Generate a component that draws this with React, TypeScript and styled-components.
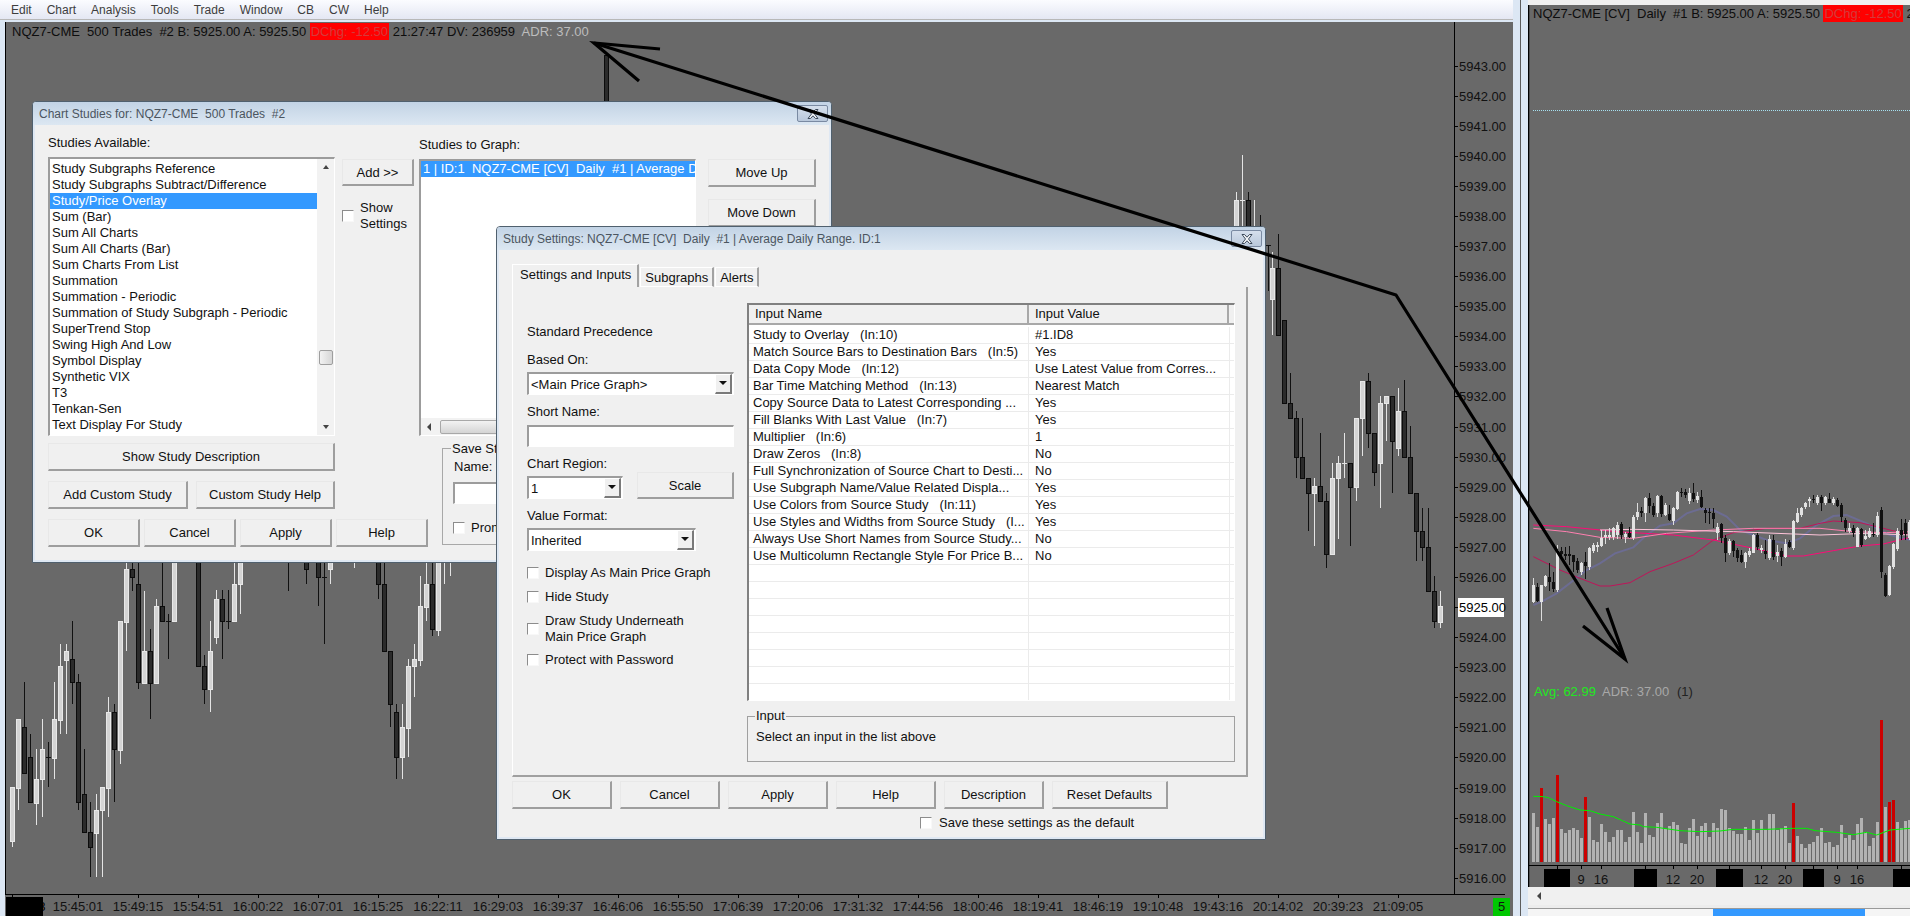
import React from 'react';
import styled, { createGlobalStyle } from 'styled-components';

const UI_FONT = '"Liberation Sans", Arial, sans-serif';

type Candle = [number, number, number, number, number, number];

// cx, high, bodyTop, bodyBottom, low, 1 = white / 0 = black
const LEFT_CANDLES: Candle[] = [
  [12, 787, 787, 841, 847, 1], [18, 719, 719, 788, 810, 1], [24, 682, 727, 773, 773, 0], [30, 734, 757, 802, 802, 0],
  [36, 749, 779, 803, 825, 1], [42, 719, 749, 779, 817, 1], [48, 742, 757, 757, 787, 0], [54, 682, 719, 758, 779, 1],
  [60, 644, 666, 720, 734, 1], [66, 644, 651, 660, 734, 1], [72, 621, 659, 682, 704, 0], [78, 674, 682, 802, 810, 0],
  [84, 749, 794, 832, 832, 0], [90, 802, 832, 847, 877, 0], [96, 794, 810, 833, 877, 1], [102, 787, 787, 810, 877, 1],
  [108, 697, 712, 788, 817, 1], [114, 704, 712, 749, 802, 0], [120, 621, 621, 750, 764, 1], [126, 540, 569, 622, 651, 1],
  [132, 540, 569, 577, 591, 0], [138, 540, 584, 682, 689, 0], [144, 591, 651, 683, 683, 1], [150, 629, 651, 683, 719, 0],
  [156, 599, 606, 683, 683, 1], [162, 540, 606, 621, 621, 0], [168, 614, 621, 621, 659, 0], [174, 540, 540, 621, 621, 1],
  [198, 540, 540, 666, 666, 0], [204, 655, 666, 689, 704, 0], [210, 621, 651, 689, 712, 1], [216, 590, 599, 637, 644, 1],
  [222, 590, 599, 621, 659, 0], [228, 590, 621, 621, 629, 0], [234, 540, 584, 621, 621, 1], [240, 540, 540, 584, 614, 1],
  [288, 540, 540, 540, 591, 0], [306, 540, 540, 569, 584, 0], [318, 540, 540, 577, 606, 0], [324, 540, 577, 577, 644, 0],
  [330, 540, 540, 569, 584, 1], [354, 540, 540, 540, 568, 1], [378, 540, 540, 584, 599, 0], [384, 540, 584, 651, 651, 0],
  [390, 651, 651, 704, 727, 0], [396, 704, 712, 757, 779, 0], [402, 704, 727, 757, 779, 1], [408, 659, 666, 728, 757, 1],
  [414, 644, 659, 666, 697, 1], [420, 576, 606, 660, 666, 1], [426, 560, 584, 607, 621, 1], [432, 540, 584, 629, 636, 0],
  [438, 540, 540, 630, 636, 1], [444, 540, 540, 540, 584, 1], [450, 540, 540, 540, 576, 1],
  [606, 55, 55, 101, 101, 0],
  [1236, 192, 200, 260, 260, 1], [1242, 155, 200, 200, 260, 1], [1248, 192, 200, 260, 260, 0], [1254, 200, 260, 260, 260, 1],
  [1260, 215, 260, 260, 260, 0], [1268, 245, 245, 245, 291, 0], [1272, 252, 268, 299, 335, 1], [1278, 234, 268, 335, 335, 0],
  [1284, 320, 320, 403, 403, 0], [1290, 373, 403, 418, 418, 0], [1296, 411, 418, 457, 478, 0], [1302, 418, 457, 478, 478, 0],
  [1308, 478, 478, 493, 531, 0], [1314, 478, 486, 493, 546, 1], [1320, 433, 486, 501, 501, 0], [1326, 493, 501, 554, 568, 0],
  [1332, 463, 478, 554, 554, 1], [1338, 456, 463, 478, 539, 1], [1344, 433, 463, 463, 478, 1], [1350, 463, 463, 487, 546, 0],
  [1356, 418, 418, 487, 501, 1], [1362, 381, 381, 418, 456, 1], [1368, 373, 381, 433, 448, 0], [1374, 433, 433, 472, 486, 0],
  [1380, 396, 403, 463, 508, 1], [1386, 396, 396, 403, 441, 1], [1392, 396, 396, 441, 493, 0], [1398, 388, 411, 448, 456, 1],
  [1404, 380, 411, 457, 457, 0], [1410, 426, 457, 493, 493, 0], [1416, 493, 493, 531, 561, 0], [1422, 508, 531, 547, 561, 0],
  [1428, 508, 547, 591, 591, 0], [1434, 576, 591, 621, 628, 0], [1440, 591, 606, 622, 628, 1],
];

// zoomed offsets from the daily chart, one row per candle: high, top, bottom, low, white
const RIGHT_RAW: number[][] = [
  [355, 375, 425, 430, 1], [370, 380, 423, 425, 0], [375, 375, 425, 482, 1], [345, 348, 378, 380, 1], [310, 350, 365, 392, 0],
  [335, 365, 388, 397, 0], [255, 270, 390, 395, 1], [260, 273, 283, 300, 0], [260, 283, 287, 300, 0], [258, 283, 287, 315, 0],
  [285, 285, 305, 335, 0], [295, 303, 330, 340, 0], [305, 310, 335, 345, 1], [275, 305, 318, 358, 0], [260, 265, 320, 330, 1],
  [250, 255, 272, 278, 1], [245, 255, 262, 275, 1], [210, 235, 258, 260, 1], [210, 225, 230, 252, 1], [205, 225, 232, 240, 1],
  [200, 205, 230, 240, 1], [185, 195, 225, 238, 1], [185, 192, 225, 238, 0], [215, 222, 230, 248, 1], [200, 218, 232, 235, 0],
  [165, 170, 235, 240, 1], [130, 155, 170, 180, 1], [142, 152, 160, 170, 0], [110, 113, 158, 185, 1], [100, 115, 138, 158, 0],
  [130, 138, 165, 170, 0], [105, 108, 160, 170, 1], [105, 108, 163, 172, 0], [130, 135, 165, 168, 1], [135, 162, 180, 183, 0],
  [140, 145, 182, 195, 1], [92, 95, 148, 150, 1], [85, 97, 100, 110, 0], [87, 97, 106, 115, 0], [85, 98, 122, 132, 1],
  [68, 100, 117, 125, 0], [95, 108, 120, 130, 1], [90, 110, 140, 145, 0], [145, 150, 158, 190, 0], [145, 155, 160, 192, 0],
  [145, 158, 178, 205, 0], [190, 200, 218, 240, 1], [188, 192, 235, 250, 0], [225, 233, 278, 305, 0], [238, 242, 280, 285, 1],
  [240, 243, 273, 290, 0], [265, 270, 295, 305, 0], [270, 285, 305, 310, 0], [275, 280, 305, 325, 1], [265, 272, 285, 290, 1],
  [222, 225, 278, 280, 1], [218, 225, 262, 270, 0], [255, 265, 270, 280, 1], [240, 272, 283, 298, 0], [225, 238, 295, 300, 1],
  [225, 240, 292, 300, 0], [255, 275, 288, 305, 1], [265, 272, 290, 318, 0], [238, 252, 290, 295, 1], [240, 245, 262, 265, 0],
  [180, 183, 265, 270, 1], [145, 160, 185, 190, 1], [140, 145, 165, 170, 1], [125, 128, 142, 148, 1], [112, 117, 122, 140, 1],
  [105, 118, 120, 130, 0], [105, 110, 130, 135, 1], [105, 110, 130, 152, 0], [108, 112, 130, 135, 1], [100, 118, 128, 130, 0],
  [110, 118, 128, 135, 1], [115, 120, 138, 142, 0], [130, 135, 172, 185, 0], [175, 180, 205, 215, 0], [190, 205, 212, 220, 1],
  [195, 205, 220, 230, 0], [200, 205, 260, 262, 1], [205, 208, 255, 262, 0], [210, 228, 236, 240, 1], [205, 212, 230, 235, 1],
  [190, 222, 226, 230, 0], [155, 168, 225, 230, 1], [140, 150, 335, 355, 0], [340, 345, 408, 412, 0], [315, 318, 405, 408, 1],
  [250, 252, 320, 328, 1], [205, 212, 268, 272, 1], [178, 210, 225, 240, 0], [178, 190, 222, 240, 0], [180, 185, 235, 240, 1],
];

const VOLUME_TOPS = [
  339, 381, -264, 357, 372, 354, -225, 387, 399, 390, 384, 390, 414, -291, 351, 420, 426, 372, 396, 426, 411, 390, 390, 426,
  411, 336, 396, 429, 339, 405, 411, 369, 339, 387, 378, 366, 375, 429, 432, 384, 357, 408, 378, 369, 411, 369, 384, 327,
  330, 384, 393, 402, 402, 381, 420, 360, 399, 360, 390, 342, 342, 390, 384, 378, 429, -309, 408, 432, 444, 432, 426, 408,
  384, 429, 426, 441, 435, 375, 414, 405, 420, 372, 354, 396, 438, 414, 366, -60, 321, -306, -300, 366, 384, 363, 360,
];

const TIME_LABELS = [
  '15:45:01', '15:49:15', '15:54:51', '16:00:22', '16:07:01', '16:15:25', '16:22:11', '16:29:03', '16:39:37', '16:46:06',
  '16:55:50', '17:06:39', '17:20:06', '17:31:32', '17:44:56', '18:00:46', '18:19:41', '18:46:19', '19:10:48', '19:43:16',
  '20:14:02', '20:39:23', '21:09:05',
];

const PRICES = Array.from({ length: 28 }, (_, i) => 5943 - i);
const priceY = (p: number) => 65.6 + (5943 - p) * 30.08;

const STUDIES = [
  'Study Subgraphs Reference', 'Study Subgraphs Subtract/Difference', 'Study/Price Overlay', 'Sum (Bar)', 'Sum All Charts',
  'Sum All Charts (Bar)', 'Sum Charts From List', 'Summation', 'Summation - Periodic', 'Summation of Study Subgraph - Periodic',
  'SuperTrend Stop', 'Swing High And Low', 'Symbol Display', 'Synthetic VIX', 'T3', 'Tenkan-Sen', 'Text Display For Study',
  'Text Display For Study Array Size',
];

const INPUTS = [
  ['Study to Overlay   (In:10)', '#1.ID8'],
  ['Match Source Bars to Destination Bars   (In:5)', 'Yes'],
  ['Data Copy Mode   (In:12)', 'Use Latest Value from Corres...'],
  ['Bar Time Matching Method   (In:13)', 'Nearest Match'],
  ['Copy Source Data to Latest Corresponding ...', 'Yes'],
  ['Fill Blanks With Last Value   (In:7)', 'Yes'],
  ['Multiplier   (In:6)', '1'],
  ['Draw Zeros   (In:8)', 'No'],
  ['Full Synchronization of Source Chart to Desti...', 'No'],
  ['Use Subgraph Name/Value Related Displa...', 'Yes'],
  ['Use Colors from Source Study   (In:11)', 'Yes'],
  ['Use Styles and Widths from Source Study   (I...', 'Yes'],
  ['Always Use Short Names from Source Study...', 'No'],
  ['Use Multicolumn Rectangle Style For Price B...', 'No'],
  ['', ''], ['', ''], ['', ''], ['', ''], ['', ''], ['', ''], ['', ''], ['', ''],
];

const MONTH_BOXES: [string, number, number][] = [['Mar', 1544, 26], ['Apr', 1634, 23], ['May', 1716, 27], ['Jun', 1803, 21], ['Jul', 1893, 20]];
const DAY_LABELS: [string, number][] = [['9', 1581], ['16', 1601], ['12', 1673], ['20', 1697], ['12', 1761], ['20', 1785], ['9', 1837], ['16', 1857]];
const RIGHT_TICKS = [1557, 1581, 1601, 1645, 1673, 1697, 1729, 1761, 1785, 1813, 1837, 1857, 1901];

const linePoints = (pairs: number[][], ox: number, oy: number) =>
  pairs.map(([x, y]) => `${ox + x / 3},${oy + y / 3}`).join(' ');

const MA_LINES: { color: string; width: number; pts: number[][] }[] = [
  { color: '#6c6c92', width: 2, pts: [[100, 435], [125, 425], [170, 400], [215, 365], [260, 330], [300, 310], [345, 280], [400, 262], [440, 225], [480, 197], [520, 190], [560, 160], [600, 147], [640, 150], [680, 170], [720, 210], [760, 225], [800, 240], [860, 250], [900, 235], [950, 195], [1000, 168], [1040, 165], [1100, 190], [1170, 225], [1230, 240]] },
  { color: '#c0145a', width: 1, pts: [[100, 290], [180, 330], [240, 355], [300, 378], [330, 378], [390, 368], [450, 335], [520, 310], [580, 285], [640, 240], [700, 218], [800, 205], [900, 205], [960, 190], [1000, 183], [1080, 188], [1150, 205], [1230, 225]] },
  { color: '#ff0a78', width: 1, pts: [[100, 195], [200, 200], [350, 215], [520, 225], [640, 240], [760, 265], [860, 288], [910, 288], [1000, 272], [1080, 258], [1150, 252], [1230, 232]] },
  { color: '#ff80b0', width: 1, pts: [[100, 205], [200, 215], [300, 232], [400, 235], [500, 220], [640, 210], [760, 205], [960, 205], [1060, 215], [1160, 218], [1230, 215]] },
  { color: '#ffc4da', width: 1, pts: [[300, 210], [400, 208], [520, 210], [700, 215], [960, 225], [1100, 220], [1230, 225]] },
];

const VOLUME_AVG = [[100, 289], [130, 290], [145, 293], [170, 305], [200, 317], [240, 330], [270, 332], [300, 342], [340, 350], [390, 372], [420, 375], [430, 380], [470, 382], [540, 392], [600, 395], [660, 393], [700, 388], [800, 388], [880, 385], [920, 385], [945, 392], [1010, 397], [1060, 404], [1100, 397], [1130, 405], [1170, 390], [1230, 385]];

const App = () => (
  <>
    <GlobalStyle />
    <Page>
      <LeftWindow>
        <MenuBar>
          {['Edit', 'Chart', 'Analysis', 'Tools', 'Trade', 'Window', 'CB', 'CW', 'Help'].map((m) => <MenuItem key={m}>{m}</MenuItem>)}
        </MenuBar>
        <LeftChartFrame>
          <ChartCanvas>
            <ChartHeader $left={7} $top={1}>
              {'NQZ7-CME  500 Trades  #2 B: 5925.00 A: 5925.50 '}
              <RedChange>DChg: -12.50</RedChange>
              {' 21:27:47 DV: 236959  '}
              <DimValue>ADR: 37.00</DimValue>
            </ChartHeader>
            <LeftChartSvg width={1508} height={894} viewBox="5 22 1508 894">
              <line x1={5.5} y1={22} x2={5.5} y2={894} stroke="#000" />
              <line x1={1454.5} y1={22} x2={1454.5} y2={894} stroke="#000" />
              <line x1={5} y1={894.5} x2={1505} y2={894.5} stroke="#000" />
              {LEFT_CANDLES.map(([cx, hi, top, bot, lo, up]) => (
                <g key={cx} shapeRendering="crispEdges">
                  <line x1={cx + 0.5} y1={hi} x2={cx + 0.5} y2={lo} stroke={up ? '#e4e4e4' : '#111'} />
                  {bot > top
                    ? <rect x={cx - 1.5} y={top + 0.5} width={4} height={bot - top} fill={up ? '#d4d4d4' : '#2b2b2b'} stroke={up ? '#e8e8e8' : '#0c0c0c'} />
                    : <line x1={cx - 2} y1={top + 0.5} x2={cx + 3} y2={top + 0.5} stroke={up ? '#e4e4e4' : '#111'} />}
                </g>
              ))}
              {PRICES.map((p) => (
                <g key={p}>
                  <line x1={1454} y1={Math.round(priceY(p)) + 0.5} x2={1458} y2={Math.round(priceY(p)) + 0.5} stroke="#000" />
                  {p !== 5925 && <AxisText x={1459} y={priceY(p) + 5}>{p}.00</AxisText>}
                </g>
              ))}
              <rect x={1458} y={598} width={46} height={19} fill="#fff" />
              <AxisText x={1459} y={612} fill="#666">5925.00</AxisText>
              <rect x={6} y={897} width={37} height={19} fill="#000" />
              <AxisText x={8} y={911} fill="#b4a488">7-9-28</AxisText>
              <line x1={12.5} y1={894} x2={12.5} y2={898} stroke="#000" />
              {TIME_LABELS.map((t, i) => (
                <g key={t}>
                  <line x1={78.5 + i * 60} y1={894} x2={78.5 + i * 60} y2={898} stroke="#000" />
                  <AxisText x={78 + i * 60} y={911} textAnchor="middle">{t}</AxisText>
                </g>
              ))}
              <rect x={1493} y={898} width={17} height={18} fill="#00c800" />
              <AxisText x={1498} y={911}>5</AxisText>
            </LeftChartSvg>
          </ChartCanvas>
        </LeftChartFrame>
      </LeftWindow>
      <WindowGap />
      <RightWindow>
        <RightTopStrip />
        <RightCanvas>
          <ChartHeader $left={5} $top={0}>
            {'NQZ7-CME [CV]  Daily  #1 B: 5925.00 A: 5925.50 '}
            <RedChange>DChg: -12.50</RedChange>
            {' 21:27:47'}
          </ChartHeader>
          <RightChartSvg width={382} height={882} viewBox="1528 5 382 882">
            <line x1={1528.5} y1={5} x2={1528.5} y2={887} stroke="#000" strokeWidth={1.5} />
            <line x1={1533} y1={110.5} x2={1910} y2={110.5} stroke="#a6e0f0" strokeDasharray="1 1" />
            {MA_LINES.map((l) => (
              <polyline key={l.color} points={linePoints(l.pts, 1500, 460)} fill="none" stroke={l.color} strokeWidth={l.width} />
            ))}
            {RIGHT_RAW.map(([hi, top, bot, lo, up], i) => {
              const cx = 1533 + i * 4;
              return (
                <g key={cx} shapeRendering="crispEdges">
                  <line x1={cx + 0.5} y1={460 + hi / 3} x2={cx + 0.5} y2={460 + lo / 3} stroke={up ? '#ddd' : '#111'} />
                  <rect x={cx - 1} y={460 + top / 3} width={3} height={Math.max(1, (bot - top) / 3)} fill={up ? '#e2e2e2' : '#111'} />
                </g>
              );
            })}
            <ChartLabel x={1534} y={696} fill="#1fe81f">Avg: 62.99</ChartLabel>
            <ChartLabel x={1602} y={696} fill="#a8a8a8">ADR: 37.00</ChartLabel>
            <ChartLabel x={1677} y={696} fill="#222">(1)</ChartLabel>
            {VOLUME_TOPS.map((v, i) => {
              const top = 700 + Math.abs(v) / 3;
              return <rect key={i} x={1532 + i * 4} y={top} width={3} height={862 - top} fill={v < 0 ? '#cc0000' : '#b2b2b2'} shapeRendering="crispEdges" />;
            })}
            <polyline points={linePoints(VOLUME_AVG, 1500, 700)} fill="none" stroke="#00f000" strokeWidth={1} />
            <line x1={1528} y1={865.5} x2={1910} y2={865.5} stroke="#000" />
            {RIGHT_TICKS.map((x) => <line key={x} x1={x + 0.5} y1={865} x2={x + 0.5} y2={869} stroke="#000" />)}
            {MONTH_BOXES.map(([m, x, w]) => (
              <g key={m}>
                <rect x={x} y={869} width={w} height={18} fill="#000" />
                <AxisText x={x + w / 2 + (m === 'Jul' ? 0 : 0)} y={884} textAnchor="middle" fill="#6a6a6a">{m}</AxisText>
              </g>
            ))}
            {DAY_LABELS.map(([d, x]) => <AxisText key={x} x={x} y={884} textAnchor="middle">{d}</AxisText>)}
          </RightChartSvg>
        </RightCanvas>
        <ScrollRow><ScrollArrow $dir="left" /></ScrollRow>
        <ScrollGap />
        <BottomStrip>
          <BottomSegment $grow={185} />
          <BottomThumb />
          <BottomSegment $grow={45} />
        </BottomStrip>
      </RightWindow>

      <StudiesDialog>
        <TitleBar>
          <TitleText>Chart Studies for: NQZ7-CME  500 Trades  #2</TitleText>
          <CloseGlyph />
        </TitleBar>
        <StudiesBody>
          <StudiesTop>
            <StudyColumn>
              <ColumnLabel>Studies Available:</ColumnLabel>
              <StudyList>
                <StudyRows>
                  {STUDIES.map((s) => <StudyRow key={s} $selected={s === 'Study/Price Overlay'}>{s}</StudyRow>)}
                </StudyRows>
                <VScroll>
                  <ScrollArrow $dir="up" />
                  <VThumb />
                  <ScrollArrow $dir="down" />
                </VScroll>
              </StudyList>
            </StudyColumn>
            <AddColumn>
              <Button $w={72} $h={27}>Add &gt;&gt;</Button>
              <ShowSettings>
                <Check />
                <span>Show<br />Settings</span>
              </ShowSettings>
            </AddColumn>
            <GraphColumn>
              <ColumnLabel>Studies to Graph:</ColumnLabel>
              <GraphList>
                <GraphRow>{'1 | ID:1  NQZ7-CME [CV]  Daily  #1 | Average Daily Range. ID:1'}</GraphRow>
                <HScroll>
                  <ScrollArrow $dir="left" />
                  <HThumb />
                </HScroll>
              </GraphList>
            </GraphColumn>
            <MoveColumn>
              <Button $w={108} $h={28}>Move Up</Button>
              <Button $w={108} $h={28}>Move Down</Button>
            </MoveColumn>
          </StudiesTop>
          <StudiesBottom>
            <ActionStack>
              <Button $w={287} $h={28}>Show Study Description</Button>
              <ButtonRow $gap={8}>
                <Button $w={140} $h={28}>Add Custom Study</Button>
                <Button $w={139} $h={28}>Custom Study Help</Button>
              </ButtonRow>
              <ButtonRow $gap={4}>
                {['OK', 'Cancel', 'Apply', 'Help'].map((b) => <Button key={b} $w={92} $h={28}>{b}</Button>)}
              </ButtonRow>
            </ActionStack>
            <SaveGroup>
              <GroupLegend>Save Study Collection</GroupLegend>
              <SaveName>Name:</SaveName>
              <SunkenInput $w={230} $h={22} />
              <CheckRow $mt={16}>
                <Check />
                <span>Prompt to Save</span>
              </CheckRow>
            </SaveGroup>
          </StudiesBottom>
        </StudiesBody>
      </StudiesDialog>

      <SettingsDialog>
        <TitleBar>
          <TitleText>Study Settings: NQZ7-CME [CV]  Daily  #1 | Average Daily Range. ID:1</TitleText>
          <CloseGlyph />
        </TitleBar>
        <SettingsBody>
          <TabStrip>
            <Tab $active>Settings and Inputs</Tab>
            <Tab>Subgraphs</Tab>
            <Tab>Alerts</Tab>
          </TabStrip>
          <TabPanel>
            <FieldColumn>
              <PanelHeading>Standard Precedence</PanelHeading>
              <FieldLabel $mt={12}>Based On:</FieldLabel>
              <DropDown $w={207} $mt={4}><span>&lt;Main Price Graph&gt;</span><DropArrow /></DropDown>
              <FieldLabel $mt={9}>Short Name:</FieldLabel>
              <SunkenInput $w={207} $h={22} $mt={5} />
              <FieldLabel $mt={9}>Chart Region:</FieldLabel>
              <RegionRow>
                <DropDown $w={96} $mt={0}><span>1</span><DropArrow /></DropDown>
                <Button $w={97} $h={27}>Scale</Button>
              </RegionRow>
              <FieldLabel $mt={9}>Value Format:</FieldLabel>
              <DropDown $w={169} $mt={4}><span>Inherited</span><DropArrow /></DropDown>
              <CheckRow $mt={14}><Check /><span>Display As Main Price Graph</span></CheckRow>
              <CheckRow $mt={8}><Check /><span>Hide Study</span></CheckRow>
              <CheckRow $mt={8}><Check /><span>Draw Study Underneath<br />Main Price Graph</span></CheckRow>
              <CheckRow $mt={7}><Check /><span>Protect with Password</span></CheckRow>
            </FieldColumn>
            <GridColumn>
              <InputGrid>
                <GridHead>
                  <HeadCell $w={280}>Input Name</HeadCell>
                  <HeadCell $w={200}>Input Value</HeadCell>
                </GridHead>
                <GridRows>
                  {INPUTS.map(([name, value], i) => (
                    <GridRow key={i}>
                      <NameCell>{name}</NameCell>
                      <ValueCell>{value}</ValueCell>
                    </GridRow>
                  ))}
                </GridRows>
              </InputGrid>
              <InputGroup>
                <InputLegend>Input</InputLegend>
                <span>Select an input in the list above</span>
              </InputGroup>
            </GridColumn>
          </TabPanel>
          <FooterButtons>
            {['OK', 'Cancel', 'Apply', 'Help', 'Description'].map((b) => <Button key={b} $w={100} $h={28}>{b}</Button>)}
            <Button $w={116} $h={28}>Reset Defaults</Button>
          </FooterButtons>
          <SaveDefault>
            <Check />
            <span>Save these settings as the default</span>
          </SaveDefault>
        </SettingsBody>
      </SettingsDialog>

      <ArrowOverlay width={1910} height={916} viewBox="0 0 1910 916">
        <polyline points="594,43 1396,295 1625,659" fill="none" stroke="#000" strokeWidth={3.2} strokeLinejoin="round" />
        <polyline points="660,49 594,43 639,81" fill="none" stroke="#000" strokeWidth={3.2} />
        <polyline points="1607,608 1625,659 1583,626" fill="none" stroke="#000" strokeWidth={3.2} />
      </ArrowOverlay>
    </Page>
  </>
);

const CloseGlyph = () => (
  <CloseButton>
    <svg width={16} height={12} viewBox="0 0 16 12">
      <path d="M3 1.5h2.5L8 4.2 10.5 1.5H13L9.5 6 13 10.5h-2.500L8 7.800 5.500 10.500H3L6.500 6z" fill="#f4f6f9" stroke="#3c4a5c" strokeWidth={1} />
    </svg>
  </CloseButton>
);

export default App;

const GlobalStyle = createGlobalStyle`
  html, body {
    margin: 0;
    padding: 0;
    background: #696969;
  }
  body {
    font-family: ${UI_FONT};
    font-size: 13px;
    color: #111;
  }
`;

const Page = styled.div`
  position: relative;
  display: flex;
  width: 1910px;
  height: 916px;
  overflow: hidden;
`;

const LeftWindow = styled.div`
  display: flex;
  flex-direction: column;
  width: 1513px;
  flex: none;
`;

const MenuBar = styled.div`
  display: flex;
  align-items: center;
  gap: 15px;
  height: 19px;
  padding-left: 11px;
  background: linear-gradient(#fbfcff, #e4e7f3);
  border-bottom: 1px solid #b8b8b8;
  box-sizing: content-box;
`;

const MenuItem = styled.span`
  font-size: 12px;
  color: #3d3d3d;
`;

const LeftChartFrame = styled.div`
  flex: 1;
  display: flex;
  padding: 2px 0 0 5px;
  background: #dce7f4;
`;

const ChartCanvas = styled.div`
  position: relative;
  flex: 1;
  background: #696969;
`;

const ChartHeader = styled.div<{ $left: number; $top: number }>`
  position: absolute;
  left: ${(p) => p.$left}px;
  top: ${(p) => p.$top}px;
  white-space: pre;
  font-size: 13px;
  line-height: 17px;
  color: #0d0d0d;
  z-index: 1;
`;

const RedChange = styled.span`
  display: inline-block;
  background: #ff0000;
  color: #d43b3b;
  padding: 0 1px;
`;

const DimValue = styled.span`
  color: #bdbdbd;
`;

const LeftChartSvg = styled.svg`
  display: block;
`;

const RightChartSvg = styled.svg`
  display: block;
`;

const AxisText = styled.text`
  font-family: ${UI_FONT};
  font-size: 13px;
  fill: #111;
  &[fill] {
    fill: attr(fill);
  }
`;

const ChartLabel = styled.text`
  font-family: ${UI_FONT};
  font-size: 13px;
`;

const WindowGap = styled.div`
  width: 15px;
  flex: none;
  background: linear-gradient(90deg, #dce7f4 0 7px, #5c5c5c 7px 8px, #dce7f4 8px);
`;

const RightWindow = styled.div`
  flex: 1;
  display: flex;
  flex-direction: column;
  min-width: 0;
`;

const RightTopStrip = styled.div`
  height: 5px;
  background: #f0f0f0;
`;

const RightCanvas = styled.div`
  position: relative;
  height: 882px;
  background: #696969;
`;

const ScrollRow = styled.div`
  display: flex;
  align-items: center;
  height: 18px;
  padding-left: 6px;
  background: #f0f0f0;
`;

const ScrollGap = styled.div`
  height: 4px;
  background: #ececec;
  border-bottom: 1px solid #999;
  box-sizing: border-box;
`;

const BottomStrip = styled.div`
  display: flex;
  height: 7px;
`;

const BottomSegment = styled.div<{ $grow: number }>`
  flex: ${(p) => p.$grow};
  background: #f5f5f5;
`;

const BottomThumb = styled.div`
  flex: none;
  width: 152px;
  background: #3399ff;
`;

const ScrollArrow = styled.div<{ $dir: 'up' | 'down' | 'left' }>`
  width: 0;
  height: 0;
  flex: none;
  border-style: solid;
  border-color: transparent;
  ${(p) => p.$dir === 'up' && 'border-width: 0 3.5px 4px; border-bottom-color: #444; margin: 6px auto 0;'}
  ${(p) => p.$dir === 'down' && 'border-width: 4px 3.5px 0; border-top-color: #444; margin: 0 auto 6px;'}
  ${(p) => p.$dir === 'left' && 'border-width: 4px 4px 4px 0; border-right-color: #444; margin: 0 0 0 3px;'}
`;

const StudiesDialog = styled.div`
  position: absolute;
  left: 32px;
  top: 101px;
  width: 800px;
  height: 462px;
  box-sizing: border-box;
  display: flex;
  flex-direction: column;
  background: #f0f0f0;
  border: 1px solid #50606e;
  border-radius: 4px 4px 0 0;
  box-shadow: inset 0 0 0 2px #dfe8f3;
`;

const SettingsDialog = styled(StudiesDialog)`
  left: 496px;
  top: 226px;
  width: 770px;
  height: 614px;
`;

const TitleBar = styled.div`
  position: relative;
  flex: none;
  height: 23px;
  display: flex;
  align-items: center;
  padding-left: 6px;
  background: linear-gradient(#c2d3e5, #dce7f2);
  border-radius: 3px 3px 0 0;
`;

const TitleText = styled.span`
  font-size: 12px;
  color: #4b5560;
  white-space: pre;
`;

const CloseButton = styled.div`
  position: absolute;
  right: 3px;
  top: 3px;
  width: 31px;
  height: 17px;
  box-sizing: border-box;
  display: flex;
  align-items: center;
  justify-content: center;
  border: 1px solid #7a8aa2;
  border-radius: 2px;
  background: linear-gradient(#d5dfec, #b9c8db);
`;

const StudiesBody = styled.div`
  flex: 1;
  display: flex;
  flex-direction: column;
  padding: 10px 0 0 15px;
`;

const StudiesTop = styled.div`
  display: flex;
  height: 301px;
`;

const StudyColumn = styled.div`
  width: 287px;
  flex: none;
  display: flex;
  flex-direction: column;
`;

const ColumnLabel = styled.div`
  height: 16px;
  line-height: 16px;
  margin-bottom: 6px;
  white-space: nowrap;
`;

const StudyList = styled.div`
  display: flex;
  height: 279px;
  box-sizing: border-box;
  overflow: hidden;
  background: #fff;
  border-style: solid;
  border-width: 2px 1px 1px 2px;
  border-color: #9c9c9c #fff #fff #9c9c9c;
`;

const StudyRows = styled.div`
  flex: 1;
  min-width: 0;
  padding-top: 2px;
`;

const StudyRow = styled.div<{ $selected?: boolean }>`
  height: 16px;
  line-height: 16px;
  padding-left: 2px;
  white-space: nowrap;
  background: ${(p) => (p.$selected ? '#3399ff' : 'transparent')};
  color: ${(p) => (p.$selected ? '#fff' : '#111')};
`;

const VScroll = styled.div`
  width: 17px;
  flex: none;
  display: flex;
  flex-direction: column;
  align-items: center;
  background: #f2f2f2;
`;

const VThumb = styled.div`
  width: 14px;
  height: 15px;
  margin-top: 181px;
  margin-bottom: auto;
  box-sizing: border-box;
  background: linear-gradient(90deg, #f2f2f2, #d6d6d6);
  border: 1px solid #9e9e9e;
  border-radius: 2px;
`;

const AddColumn = styled.div`
  width: 72px;
  flex: none;
  margin: 24px 5px 0 7px;
`;

const ShowSettings = styled.div`
  display: flex;
  align-items: center;
  gap: 6px;
  margin-top: 14px;
  line-height: 16px;
`;

const GraphColumn = styled.div`
  width: 277px;
  flex: none;
  margin-right: 12px;
  display: flex;
  flex-direction: column;
  & > div:first-child {
    margin-top: 2px;
  }
`;

const GraphList = styled.div`
  height: 277px;
  box-sizing: border-box;
  display: flex;
  flex-direction: column;
  background: #fff;
  overflow: hidden;
  border-style: solid;
  border-width: 2px 1px 1px 2px;
  border-color: #9c9c9c #fff #fff #9c9c9c;
`;

const GraphRow = styled.div`
  height: 16px;
  line-height: 16px;
  padding-left: 2px;
  white-space: pre;
  overflow: hidden;
  color: #fff;
  background: #3399ff;
`;

const HScroll = styled.div`
  margin-top: auto;
  height: 17px;
  display: flex;
  align-items: center;
  padding-left: 3px;
  background: #f2f2f2;
`;

const HThumb = styled.div`
  width: 200px;
  height: 14px;
  margin-left: 9px;
  box-sizing: border-box;
  background: linear-gradient(#f2f2f2, #d4d4d4);
  border: 1px solid #a8a8a8;
  border-radius: 2px;
`;

const MoveColumn = styled.div`
  width: 108px;
  flex: none;
  display: flex;
  flex-direction: column;
  gap: 12px;
  margin-top: 24px;
`;

const Button = styled.div<{ $w: number; $h: number }>`
  width: ${(p) => p.$w}px;
  height: ${(p) => p.$h}px;
  flex: none;
  box-sizing: border-box;
  display: flex;
  align-items: center;
  justify-content: center;
  white-space: nowrap;
  background: #f0f0f0;
  border-style: solid;
  border-width: 1px 2px 2px 1px;
  border-color: #e8e8e8 #9e9e9e #9e9e9e #e8e8e8;
`;

const StudiesBottom = styled.div`
  display: flex;
`;

const ActionStack = styled.div`
  width: 380px;
  flex: none;
  display: flex;
  flex-direction: column;
  padding-top: 7px;
  gap: 10px;
`;

const ButtonRow = styled.div<{ $gap: number }>`
  display: flex;
  gap: ${(p) => p.$gap}px;
`;

const SaveGroup = styled.fieldset`
  position: relative;
  width: 250px;
  height: 97px;
  box-sizing: border-box;
  margin: 12px 0 0 14px;
  padding: 10px 10px 0 10px;
  border: 1px solid #a8a8a8;
`;

const GroupLegend = styled.span`
  position: absolute;
  top: -8px;
  left: 8px;
  padding: 0 1px;
  background: #f0f0f0;
  white-space: nowrap;
`;

const SaveName = styled.div`
  line-height: 16px;
  margin-bottom: 7px;
  margin-left: 1px;
`;

const SunkenInput = styled.div<{ $w: number; $h: number; $mt?: number }>`
  width: ${(p) => p.$w}px;
  height: ${(p) => p.$h}px;
  margin-top: ${(p) => p.$mt || 0}px;
  box-sizing: border-box;
  background: #fff;
  border-style: solid;
  border-width: 2px 1px 1px 2px;
  border-color: #9c9c9c #fff #fff #9c9c9c;
`;

const Check = styled.div`
  width: 12px;
  height: 12px;
  flex: none;
  box-sizing: border-box;
  background: #fff;
  border-style: solid;
  border-width: 1px;
  border-color: #8c8c8c #f8f8f8 #f8f8f8 #8c8c8c;
`;

const CheckRow = styled.div<{ $mt: number }>`
  display: flex;
  align-items: center;
  gap: 6px;
  margin-top: ${(p) => p.$mt}px;
  line-height: 16px;
  white-space: nowrap;
`;

const VScrollBarSpacer = styled.div``;

const SettingsBody = styled.div`
  flex: 1;
  display: flex;
  flex-direction: column;
  padding: 14px 0 0 15px;
`;

const TabStrip = styled.div`
  display: flex;
  align-items: flex-end;
  height: 23px;
`;

const Tab = styled.div<{ $active?: boolean }>`
  height: ${(p) => (p.$active ? 23 : 20)}px;
  box-sizing: border-box;
  padding: ${(p) => (p.$active ? '2px 6px 0 7px' : '2px 4px 0 4px')};
  margin-right: 1px;
  line-height: 16px;
  white-space: nowrap;
  background: #f0f0f0;
  border-top: 1px solid #fff;
  border-left: 1px solid #fff;
  border-right: 2px solid #a2a2a2;
  ${(p) => !p.$active && 'border-bottom: 1px solid #fff;'}
`;

const TabPanel = styled.div`
  display: flex;
  width: 736px;
  height: 490px;
  box-sizing: border-box;
  border-style: solid;
  border-width: 0 2px 2px 1px;
  border-color: #fff #a0a0a0 #a0a0a0 #fff;
`;

const FieldColumn = styled.div`
  width: 220px;
  flex: none;
  padding: 37px 0 0 14px;
  box-sizing: content-box;
`;

const PanelHeading = styled.div`
  line-height: 16px;
  white-space: nowrap;
`;

const FieldLabel = styled.div<{ $mt: number }>`
  line-height: 16px;
  margin-top: ${(p) => p.$mt}px;
  white-space: nowrap;
`;

const DropDown = styled.div<{ $w: number; $mt: number }>`
  width: ${(p) => p.$w}px;
  height: 23px;
  margin-top: ${(p) => p.$mt}px;
  box-sizing: border-box;
  display: flex;
  align-items: center;
  justify-content: space-between;
  padding-left: 2px;
  background: #fff;
  border-style: solid;
  border-width: 2px 1px 1px 2px;
  border-color: #9c9c9c #fff #fff #9c9c9c;
`;

const DropArrow = styled.div`
  position: relative;
  width: 17px;
  height: 100%;
  box-sizing: border-box;
  margin-right: 1px;
  background: #f0f0f0;
  border-style: solid;
  border-width: 1px 2px 2px 1px;
  border-color: #fff #7a7a7a #7a7a7a #fff;
  &::after {
    content: '';
    position: absolute;
    left: 3px;
    top: 6px;
    border-style: solid;
    border-width: 4px 4px 0;
    border-color: #111 transparent transparent;
  }
`;

const RegionRow = styled.div`
  display: flex;
  align-items: flex-end;
  gap: 14px;
  margin-top: 0;
`;

const GridColumn = styled.div`
  width: 488px;
  flex: none;
  padding-top: 16px;
  margin-left: 0;
`;

const InputGrid = styled.div`
  height: 398px;
  box-sizing: border-box;
  display: flex;
  flex-direction: column;
  overflow: hidden;
  background: #fff;
  border-style: solid;
  border-width: 2px 1px 1px 2px;
  border-color: #808080 #fff #fff #808080;
`;

const GridHead = styled.div`
  flex: none;
  display: flex;
  height: 20px;
  box-sizing: border-box;
  background: #f0f0f0;
  border-bottom: 2px solid #a8a8a8;
`;

const HeadCell = styled.div<{ $w: number }>`
  width: ${(p) => p.$w}px;
  box-sizing: border-box;
  padding-left: 6px;
  line-height: 18px;
  border-right: 2px solid #a8a8a8;
`;

const GridRows = styled.div`
  flex: 1;
  padding-top: 2px;
`;

const GridRow = styled.div`
  display: flex;
  height: 17px;
  box-sizing: border-box;
  border-bottom: 1px solid #ebebeb;
`;

const NameCell = styled.div`
  width: 280px;
  box-sizing: border-box;
  padding-left: 4px;
  line-height: 16px;
  white-space: pre;
  overflow: hidden;
  border-right: 1px solid #ebebeb;
`;

const ValueCell = styled.div`
  width: 201px;
  box-sizing: border-box;
  padding-left: 6px;
  line-height: 16px;
  white-space: pre;
  overflow: hidden;
  border-right: 1px solid #ebebeb;
`;

const InputGroup = styled.div`
  position: relative;
  height: 46px;
  box-sizing: border-box;
  margin-top: 15px;
  padding: 12px 0 0 8px;
  line-height: 16px;
  border: 1px solid #a0a0a0;
`;

const InputLegend = styled.span`
  position: absolute;
  left: 7px;
  top: -9px;
  padding: 0 1px;
  background: #f0f0f0;
`;

const FooterButtons = styled.div`
  display: flex;
  gap: 8px;
  margin-top: 4px;
`;

const SaveDefault = styled.div`
  display: flex;
  align-items: center;
  gap: 7px;
  margin: 6px 0 0 408px;
  line-height: 16px;
`;

const ArrowOverlay = styled.svg`
  position: absolute;
  left: 0;
  top: 0;
  z-index: 5;
  pointer-events: none;
`;
